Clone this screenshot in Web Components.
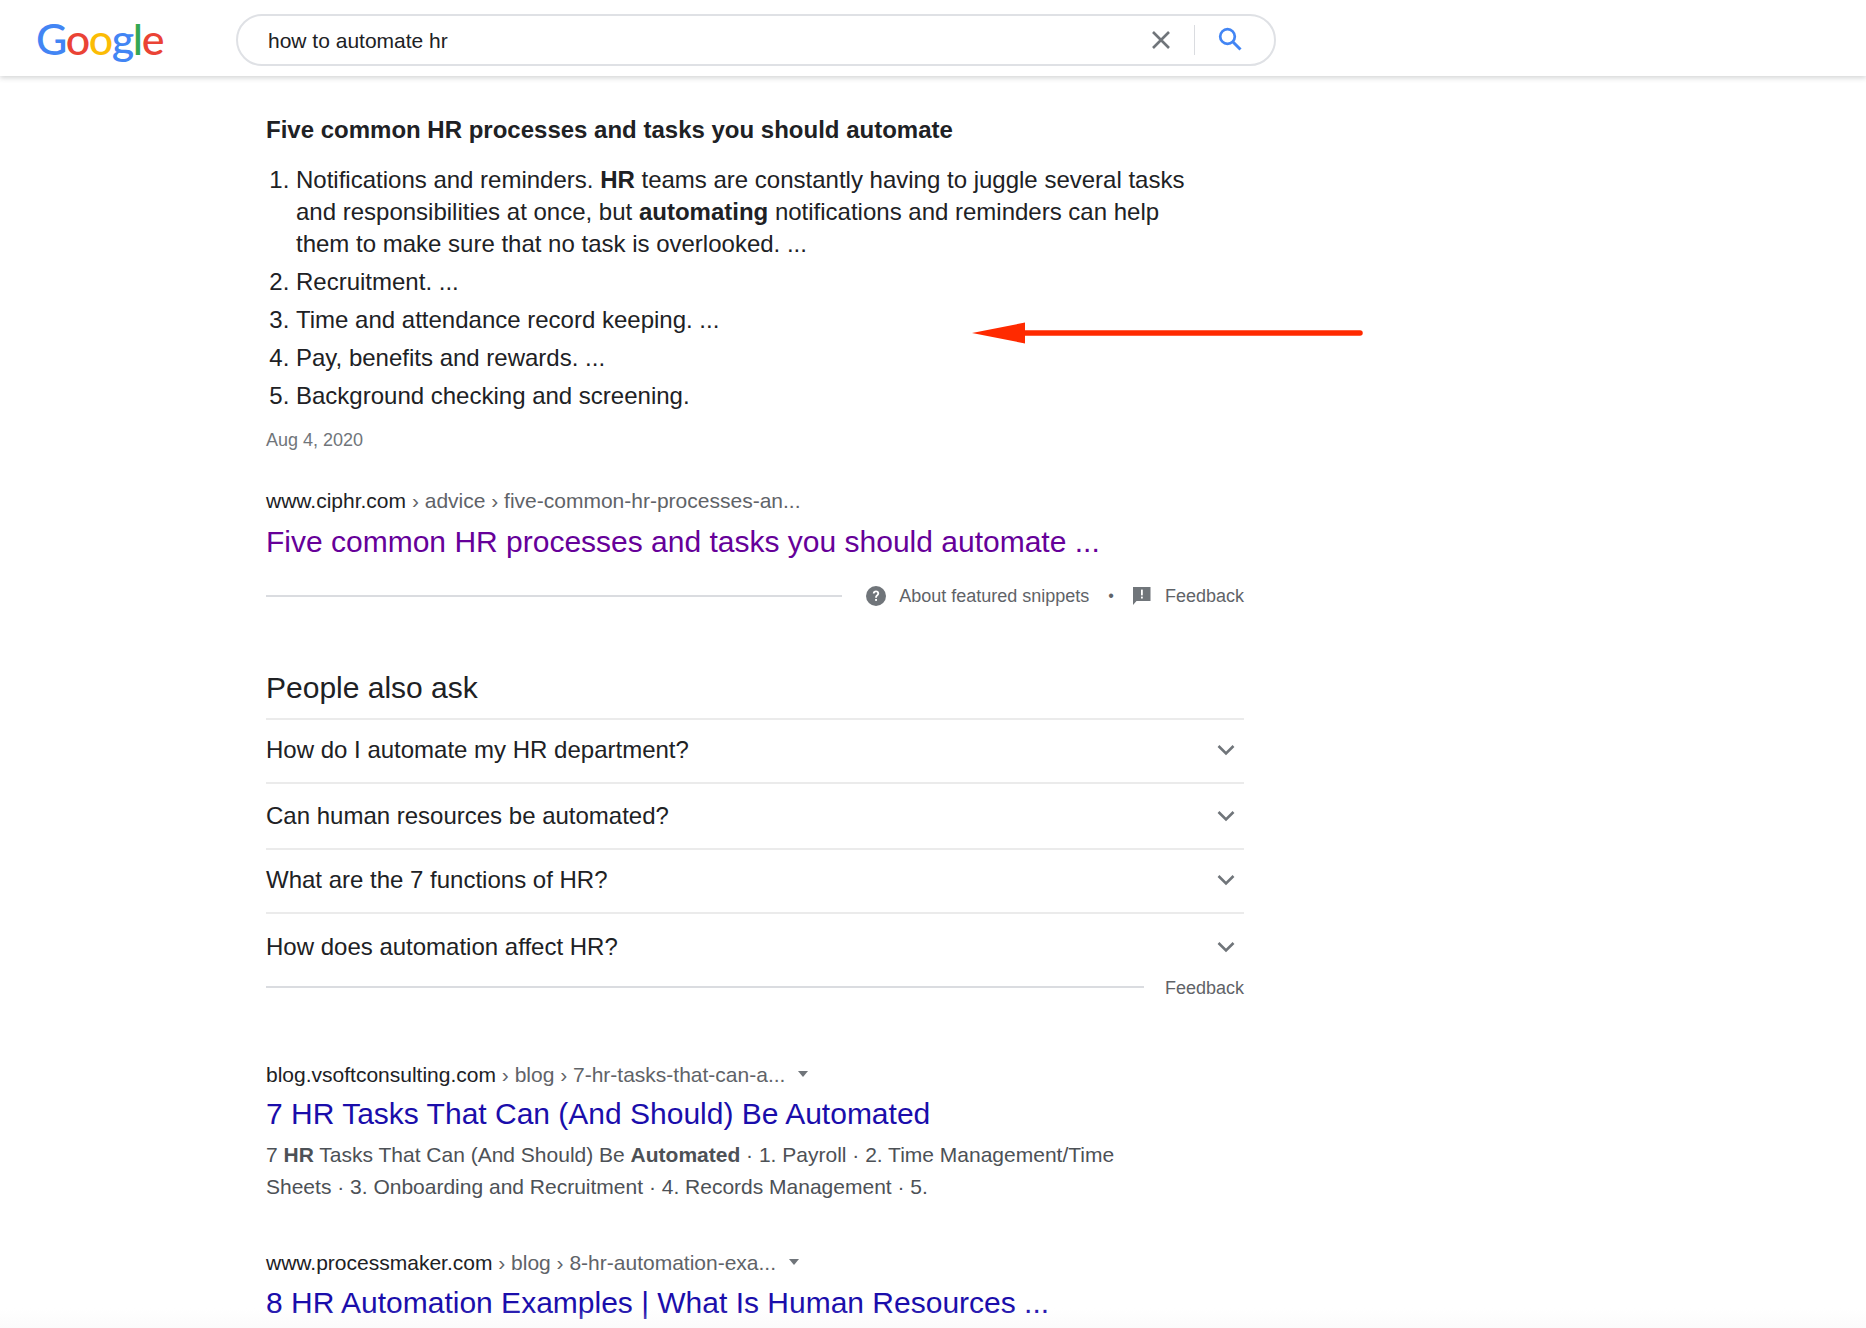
<!DOCTYPE html>
<html>
<head>
<meta charset="utf-8">
<title>how to automate hr</title>
<style>
html,body{margin:0;background:#fff;height:1328px;overflow:hidden}
body{font-family:"Liberation Sans",Arial,sans-serif;color:#202124}
</style>
</head>
<body>
<g-page>
  <g-header query="how to automate hr"></g-header>
  <g-snippet>
    <span slot="title">Five common HR processes and tasks you should automate</span>
    <li>Notifications and reminders. <b>HR</b> teams are constantly having to juggle several tasks and responsibilities at once, but <b>automating</b> notifications and reminders can help them to make sure that no task is overlooked. ...</li>
    <li>Recruitment. ...</li>
    <li>Time and attendance record keeping. ...</li>
    <li>Pay, benefits and rewards. ...</li>
    <li>Background checking and screening.</li>
  </g-snippet>
  <g-paa>
    <g-question h="64" style="padding-bottom:2px">How do I automate my HR department?</g-question>
    <g-question h="66">Can human resources be automated?</g-question>
    <g-question h="64" style="padding-bottom:2px">What are the 7 functions of HR?</g-question>
    <g-question h="61" last>How does automation affect HR?</g-question>
  </g-paa>
  <g-result top="59" link="5" host="blog.vsoftconsulting.com" path=" › blog › 7-hr-tasks-that-can-a..." title="7 HR Tasks That Can (And Should) Be Automated">
    7 <b>HR</b> Tasks That Can (And Should) Be <b>Automated</b> · 1. Payroll · 2. Time Management/Time Sheets · 3. Onboarding and Recruitment · 4. Records Management · 5.
  </g-result>
  <g-result top="46" link="6" host="www.processmaker.com" path=" › blog › 8-hr-automation-exa..." title="8 HR Automation Examples | What Is Human Resources ..."></g-result>
  <g-arrow></g-arrow>
</g-page>

<script>
// page wrapper
class GPage extends HTMLElement{
  connectedCallback(){
    this.attachShadow({mode:'open'});
    this.shadowRoot.innerHTML=`<style>
      :host{display:block;position:relative;height:1328px;overflow:hidden}
      .fade{position:absolute;left:0;right:0;bottom:0;height:20px;background:linear-gradient(rgba(245,245,245,0),rgba(245,245,245,.4))}
    </style><slot></slot><div class="fade"></div>`;
  }
}
customElements.define('g-page',GPage);

class GHeader extends HTMLElement{
  connectedCallback(){
    let q=this.getAttribute('query');
    this.attachShadow({mode:'open'});
    this.shadowRoot.innerHTML=`<style>
      :host{display:flex;align-items:flex-start;height:76px;box-sizing:border-box;background:#fff;box-shadow:0 2px 5px rgba(60,64,67,.22);padding:14px 0 0 36px}
      .logo{width:200px;height:52px;font:500 43px/50px Lato,sans-serif;letter-spacing:-1.4px}
      .box{display:flex;align-items:center;width:1040px;height:52px;box-sizing:border-box;border:2px solid #dfe1e5;border-radius:26px;padding-left:30px}
      .q{flex:1;font-size:21px;color:#202124;padding-top:2px}
      svg{display:block}
      .x{margin-right:23px}
      .sep{width:1.5px;height:30px;background:#dadce0;margin-right:22px}
      .s{margin-right:31px;margin-top:-2px}
    </style>
    <div class="logo"><span style="color:#4285f4">G</span><span style="color:#ea4335">o</span><span style="color:#fbbc05">o</span><span style="color:#4285f4">g</span><span style="color:#34a853">l</span><span style="color:#ea4335">e</span></div>
    <div class="box">
      <div class="q">${q}</div>
      <svg class="x" width="20" height="20" viewBox="0 0 20 20"><path d="M2 2L18 18M18 2L2 18" stroke="#70757a" stroke-width="2.6" fill="none"/></svg>
      <div class="sep"></div>
      <svg class="s" width="26" height="26" viewBox="0 0 26 26"><circle cx="10.5" cy="10.5" r="7.3" stroke="#4285f4" stroke-width="2.7" fill="none"/><path d="M16 16L23.5 23.5" stroke="#4285f4" stroke-width="3" fill="none"/></svg>
    </div>`;
  }
}
customElements.define('g-header',GHeader);

class GSnippet extends HTMLElement{
  connectedCallback(){
    this.attachShadow({mode:'open'});
    this.shadowRoot.innerHTML=`<style>
      :host{display:block;width:978px;margin:38px 0 0 266px}
      .h{font-size:24px;font-weight:bold;line-height:32px;color:#202124}
      ol{margin:18px 0 0;padding:0 0 0 30px;width:900px;font-size:24px;line-height:32px;color:#202124}
      ::slotted(li){margin-bottom:6px;padding-left:0}
      .date{font-size:18px;line-height:28px;color:#70757a;margin-top:14px}
      .cite{margin-top:33px;font-size:21px;line-height:28px;color:#5f6368}
      .cite span{color:#202124}
      .link{font-size:30px;line-height:40px;color:#609;margin-top:7px;white-space:nowrap}
      .about{display:flex;align-items:center;height:28px;margin-top:20px;font-size:18px;color:#5f6368}
      .line{flex:1;height:2px;background:#dadce0;margin-right:24px;margin-top:-1px}
      .t{margin-left:13px}
      .dot{margin:0 19px;font-size:16px}
      .t2{margin-left:14px}
    </style>
    <div class="h"><slot name="title"></slot></div>
    <ol><slot></slot></ol>
    <div class="date">Aug 4, 2020</div>
    <div class="cite"><span>www.ciphr.com</span> › advice › five-common-hr-processes-an...</div>
    <div class="link">Five common HR processes and tasks you should automate ...</div>
    <div class="about">
      <div class="line"></div>
      <svg width="20" height="20" viewBox="0 0 20 20"><circle cx="10" cy="10" r="10" fill="#70757a"/><path d="M6.8 7.6c0-1.8 1.4-3.1 3.2-3.1s3.2 1.2 3.2 2.9c0 2.2-2.3 2.3-2.3 4.3H9.1c0-2.8 2.2-2.9 2.2-4.3 0-.7-.6-1.2-1.3-1.2s-1.3.6-1.4 1.4z" fill="#fff"/><rect x="9.1" y="13" width="1.9" height="1.9" fill="#fff"/></svg>
      <span class="t">About featured snippets</span>
      <span class="dot">•</span>
      <svg width="18" height="18" viewBox="0 0 18 18"><path d="M0 0H17.5V14H3.5L0 18z" fill="#70757a"/><rect x="8" y="2.6" width="1.8" height="5.8" fill="#fff"/><rect x="8" y="9.6" width="1.8" height="1.9" fill="#fff"/></svg>
      <span class="t2">Feedback</span>
    </div>`;
  }
}
customElements.define('g-snippet',GSnippet);

class GPaa extends HTMLElement{
  connectedCallback(){
    this.attachShadow({mode:'open'});
    this.shadowRoot.innerHTML=`<style>
      :host{display:block;width:978px;margin:58px 0 0 266px}
      .h{font-size:30px;line-height:40px;color:#202124;padding-bottom:10px;border-bottom:2px solid #ebebeb}
      .fb{display:flex;align-items:center;height:28px;font-size:18px;color:#5f6368;margin-top:-1px}
      .line{flex:1;height:2px;background:#dadce0;margin-right:21px;margin-top:-2px}
      .fb span{padding-top:1px}
    </style>
    <div class="h">People also ask</div>
    <slot></slot>
    <div class="fb"><div class="line"></div><span>Feedback</span></div>`;
  }
}
customElements.define('g-paa',GPaa);

class GQuestion extends HTMLElement{
  connectedCallback(){
    this.attachShadow({mode:'open'});
    let h=this.getAttribute('h');
    let last=this.hasAttribute('last');
    this.shadowRoot.innerHTML=`<style>
      :host{display:flex;align-items:center;justify-content:space-between;box-sizing:border-box;height:${h}px;font-size:24px;color:#202124;${last?'padding-top:5px;':'border-bottom:2px solid #ebebeb;'}}
      svg{display:block;margin-right:9px}
    </style>
    <slot></slot>
    <svg width="18" height="12" viewBox="0 0 18 12"><path d="M1.5 2L9 9.5L16.5 2" stroke="#70757a" stroke-width="2.6" fill="none"/></svg>`;
  }
}
customElements.define('g-question',GQuestion);

class GResult extends HTMLElement{
  connectedCallback(){
    this.attachShadow({mode:'open'});
    this.shadowRoot.innerHTML=`<style>
      :host{display:block;width:978px;margin:0 0 0 266px;padding-top:${this.getAttribute('top')}px}
      .cite{display:flex;align-items:center;font-size:21px;line-height:28px;color:#5f6368;white-space:pre}
      .cite span{color:#202124}
      .arr{width:0;height:0;border:5.5px solid transparent;border-top:6px solid #70757a;border-bottom:0;margin-left:13px;margin-top:-2px}
      .link{font-size:30px;line-height:40px;color:#1a0dab;margin-top:${this.getAttribute('link')}px;white-space:nowrap}
      .txt{font-size:21px;line-height:32px;color:#4d5156;width:880px;margin-top:5px}
    </style>
    <div class="cite"><span>${this.getAttribute('host')}</span>${this.getAttribute('path')}<i class="arr"></i></div>
    <div class="link">${this.getAttribute('title')}</div>
    <div class="txt"><slot></slot></div>`;
  }
}
customElements.define('g-result',GResult);

// red arrow lying over the page
class GArrow extends HTMLElement{
  connectedCallback(){
    this.attachShadow({mode:'open'});
    this.shadowRoot.innerHTML=`<style>
      :host{position:absolute;left:972px;top:322px;width:392px;height:24px}
      svg{display:block}
    </style>
    <svg width="392" height="24" viewBox="0 0 392 24"><path d="M0 11L53 0.5V21.5z" fill="#ff2a00"/><path d="M50 11H388" stroke="#ff2a00" stroke-width="5.5" stroke-linecap="round"/></svg>`;
  }
}
customElements.define('g-arrow',GArrow);
</script>
</body>
</html>
